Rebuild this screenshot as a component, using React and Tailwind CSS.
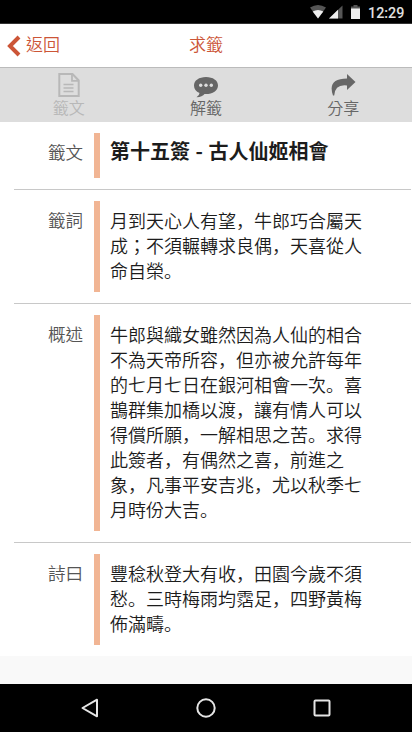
import React from "react";

const body = "font-['Noto_Sans_CJK_TC','Noto_Sans',sans-serif] font-[350]";

// Commas and full stops sit at the lower left of their cell.
function Text({ children }) {
  return children.split(/([，。])/).map((part, i) =>
    part === "，" || part === "。" ? (
      <span key={i} lang="zh-CN" className="font-['Noto_Sans_CJK_SC',sans-serif]">{part}</span>
    ) : (
      <React.Fragment key={i}>{part}</React.Fragment>
    )
  );
}

function StatusBar() {
  return (
    <div className="flex h-6 shrink-0 items-start justify-end border-b border-[#333] bg-black pr-[8px]">
      <svg width="60" height="23" viewBox="0 0 60 23">
        <path d="M0 7.5Q8 2.5 16 7.5L8 18.5Z" fill="#555" />
        <path d="M2.7 11.5Q8 8.5 13.3 11.5L8 18.5Z" fill="#eee" />
        <path d="M19 18.5L32.5 5.5V18.5Z" fill="#555" />
        <path d="M19 18.5L28 9.8V18.5Z" fill="#eee" />
        <path d="M41 6.5h2.5V5h4v1.5H50V9h-9z" fill="#555" />
        <path d="M41 8.5h9V19h-9z" fill="#eee" />
      </svg>
      <span className="-ml-[2px] mt-[2px] w-[36px] whitespace-nowrap font-['Roboto',sans-serif] text-[14.3px] font-medium leading-[23px] text-[#e0e0e0]">12:29</span>
    </div>
  );
}

function Header() {
  return (
    <header className="grid h-[44px] shrink-0 grid-cols-3 items-center border-b border-[#bbb] bg-white text-[17px] leading-none text-[#cc5537]">
      <div className="flex items-center pl-[7px]">
        <svg width="14" height="22" viewBox="0 0 14 22">
          <path d="M12 2L3 11L12 20" fill="none" stroke="#cc5537" strokeWidth="4" />
        </svg>
        <span className="ml-[5px] -mt-[5px]">返回</span>
      </div>
      <div className="-mt-[4px] text-center">求籤</div>
    </header>
  );
}

function Tab({ label, dim, children }) {
  return (
    <div className={`flex flex-col items-center pt-[4px] ${dim ? "text-[#b8b8b8]" : "text-[#666]"}`}>
      {children}
      <span className="text-[16px] leading-[17px]">{label}</span>
    </div>
  );
}

function Tabs() {
  return (
    <nav className="grid h-[54px] shrink-0 grid-cols-3 bg-[#ddd]">
      <Tab label="籤文" dim>
        <svg width="26" height="27" viewBox="0 0 26 27" fill="none" stroke="currentColor">
          <path d="M3.3 2H16.5L22.7 8.5V24H3.3Z" strokeWidth="2" />
          <path d="M16 2V8.8H22.5" strokeWidth="1.8" />
          <path d="M7.5 12.5H17.5M7.5 16H17.5M7.5 19.5H17.5" strokeWidth="1.5" />
        </svg>
      </Tab>
      <Tab label="解籤">
        <svg width="26" height="27" viewBox="0 0 26 27" fill="currentColor">
          <path d="M13 5C6 5 1 8.5 1 13.5C1 17 3 19.5 6.5 21Q6.5 23.5 3.5 25.3Q9.5 25 11.5 22C19 22.5 25 19 25 13.5C25 8.5 20 5 13 5Z" />
          <g fill="#ddd"><circle cx="7.7" cy="13.3" r="1.7" /><circle cx="13" cy="13.3" r="1.7" /><circle cx="18.3" cy="13.3" r="1.7" /></g>
        </svg>
      </Tab>
      <Tab label="分享">
        <svg width="26" height="27" viewBox="0 0 26 27" fill="currentColor">
          <path d="M17 2L25.5 10L17 18V13.5Q5 12 4.2 23.5H3Q-3 6.5 17 6.5Z" />
        </svg>
      </Tab>
    </nav>
  );
}

function Row({ label, height, last, children }) {
  return (
    <section className={`ml-[14px] mr-px flex shrink-0 py-[11px] ${height} ${last ? "" : "border-b border-[#c8c8c8]"}`}>
      <div className="w-[80px] pr-[11px] pt-[6px] text-right text-[17.5px] leading-[25px] text-[#555]">{label}</div>
      <div className="w-[6px] bg-[#f1b594]" />
      <div className="w-[270px] pl-[10px] pt-[7px] text-[18px] leading-[25px] text-[#1c1c1c]">{children}</div>
    </section>
  );
}

function NavBar() {
  return (
    <footer className="grid h-12 shrink-0 grid-cols-[148px_116px_148px] items-center bg-black">
      <svg className="ml-[80px]" width="20" height="22" viewBox="0 0 20 22"><path d="M2.5 11L17 2.7V19.3Z" fill="none" stroke="#e5e5e5" strokeWidth="2" strokeLinejoin="round" /></svg>
      <svg className="justify-self-center" width="22" height="22"><circle cx="11" cy="11" r="8.7" fill="none" stroke="#e5e5e5" strokeWidth="2" /></svg>
      <svg className="ml-[47px]" width="22" height="22"><rect x="3.5" y="3.5" width="15" height="15" rx="1" fill="none" stroke="#e5e5e5" strokeWidth="2" /></svg>
    </footer>
  );
}

export default function App() {
  return (
    <div lang="zh-TW" className={`flex h-[732px] w-[412px] flex-col overflow-hidden bg-[#f9f9f9] ${body}`}>
      <StatusBar />
      <Header />
      <Tabs />
      <main className="flex flex-1 flex-col">
        <div className="flex flex-col bg-white">
          <Row label="籤文" height="h-[68px]"><h1 className="-mt-[2px] text-[20px] font-bold [word-spacing:1px]">第十五簽 - 古人仙姬相會</h1></Row>
          <Row label="籤詞" height="h-[114px]"><Text>月到天心人有望，牛郎巧合屬天成；不須輾轉求良偶，天喜從人命自榮。</Text></Row>
          <Row label="概述" height="h-[239px]"><Text>牛郎與織女雖然因為人仙的相合不為天帝所容，但亦被允許每年的七月七日在銀河相會一次。喜鵲群集加橋以渡，讓有情人可以得償所願，一解相思之苦。求得此簽者，有偶然之喜，前進之象，凡事平安吉兆，尤以秋季七月時份大吉。</Text></Row>
          <Row label="詩曰" height="h-[113px]" last><Text>豐稔秋登大有收，田園今歲不須愁。三時梅雨均霑足，四野黃梅佈滿疇。</Text></Row>
        </div>
      </main>
      <NavBar />
    </div>
  );
}
